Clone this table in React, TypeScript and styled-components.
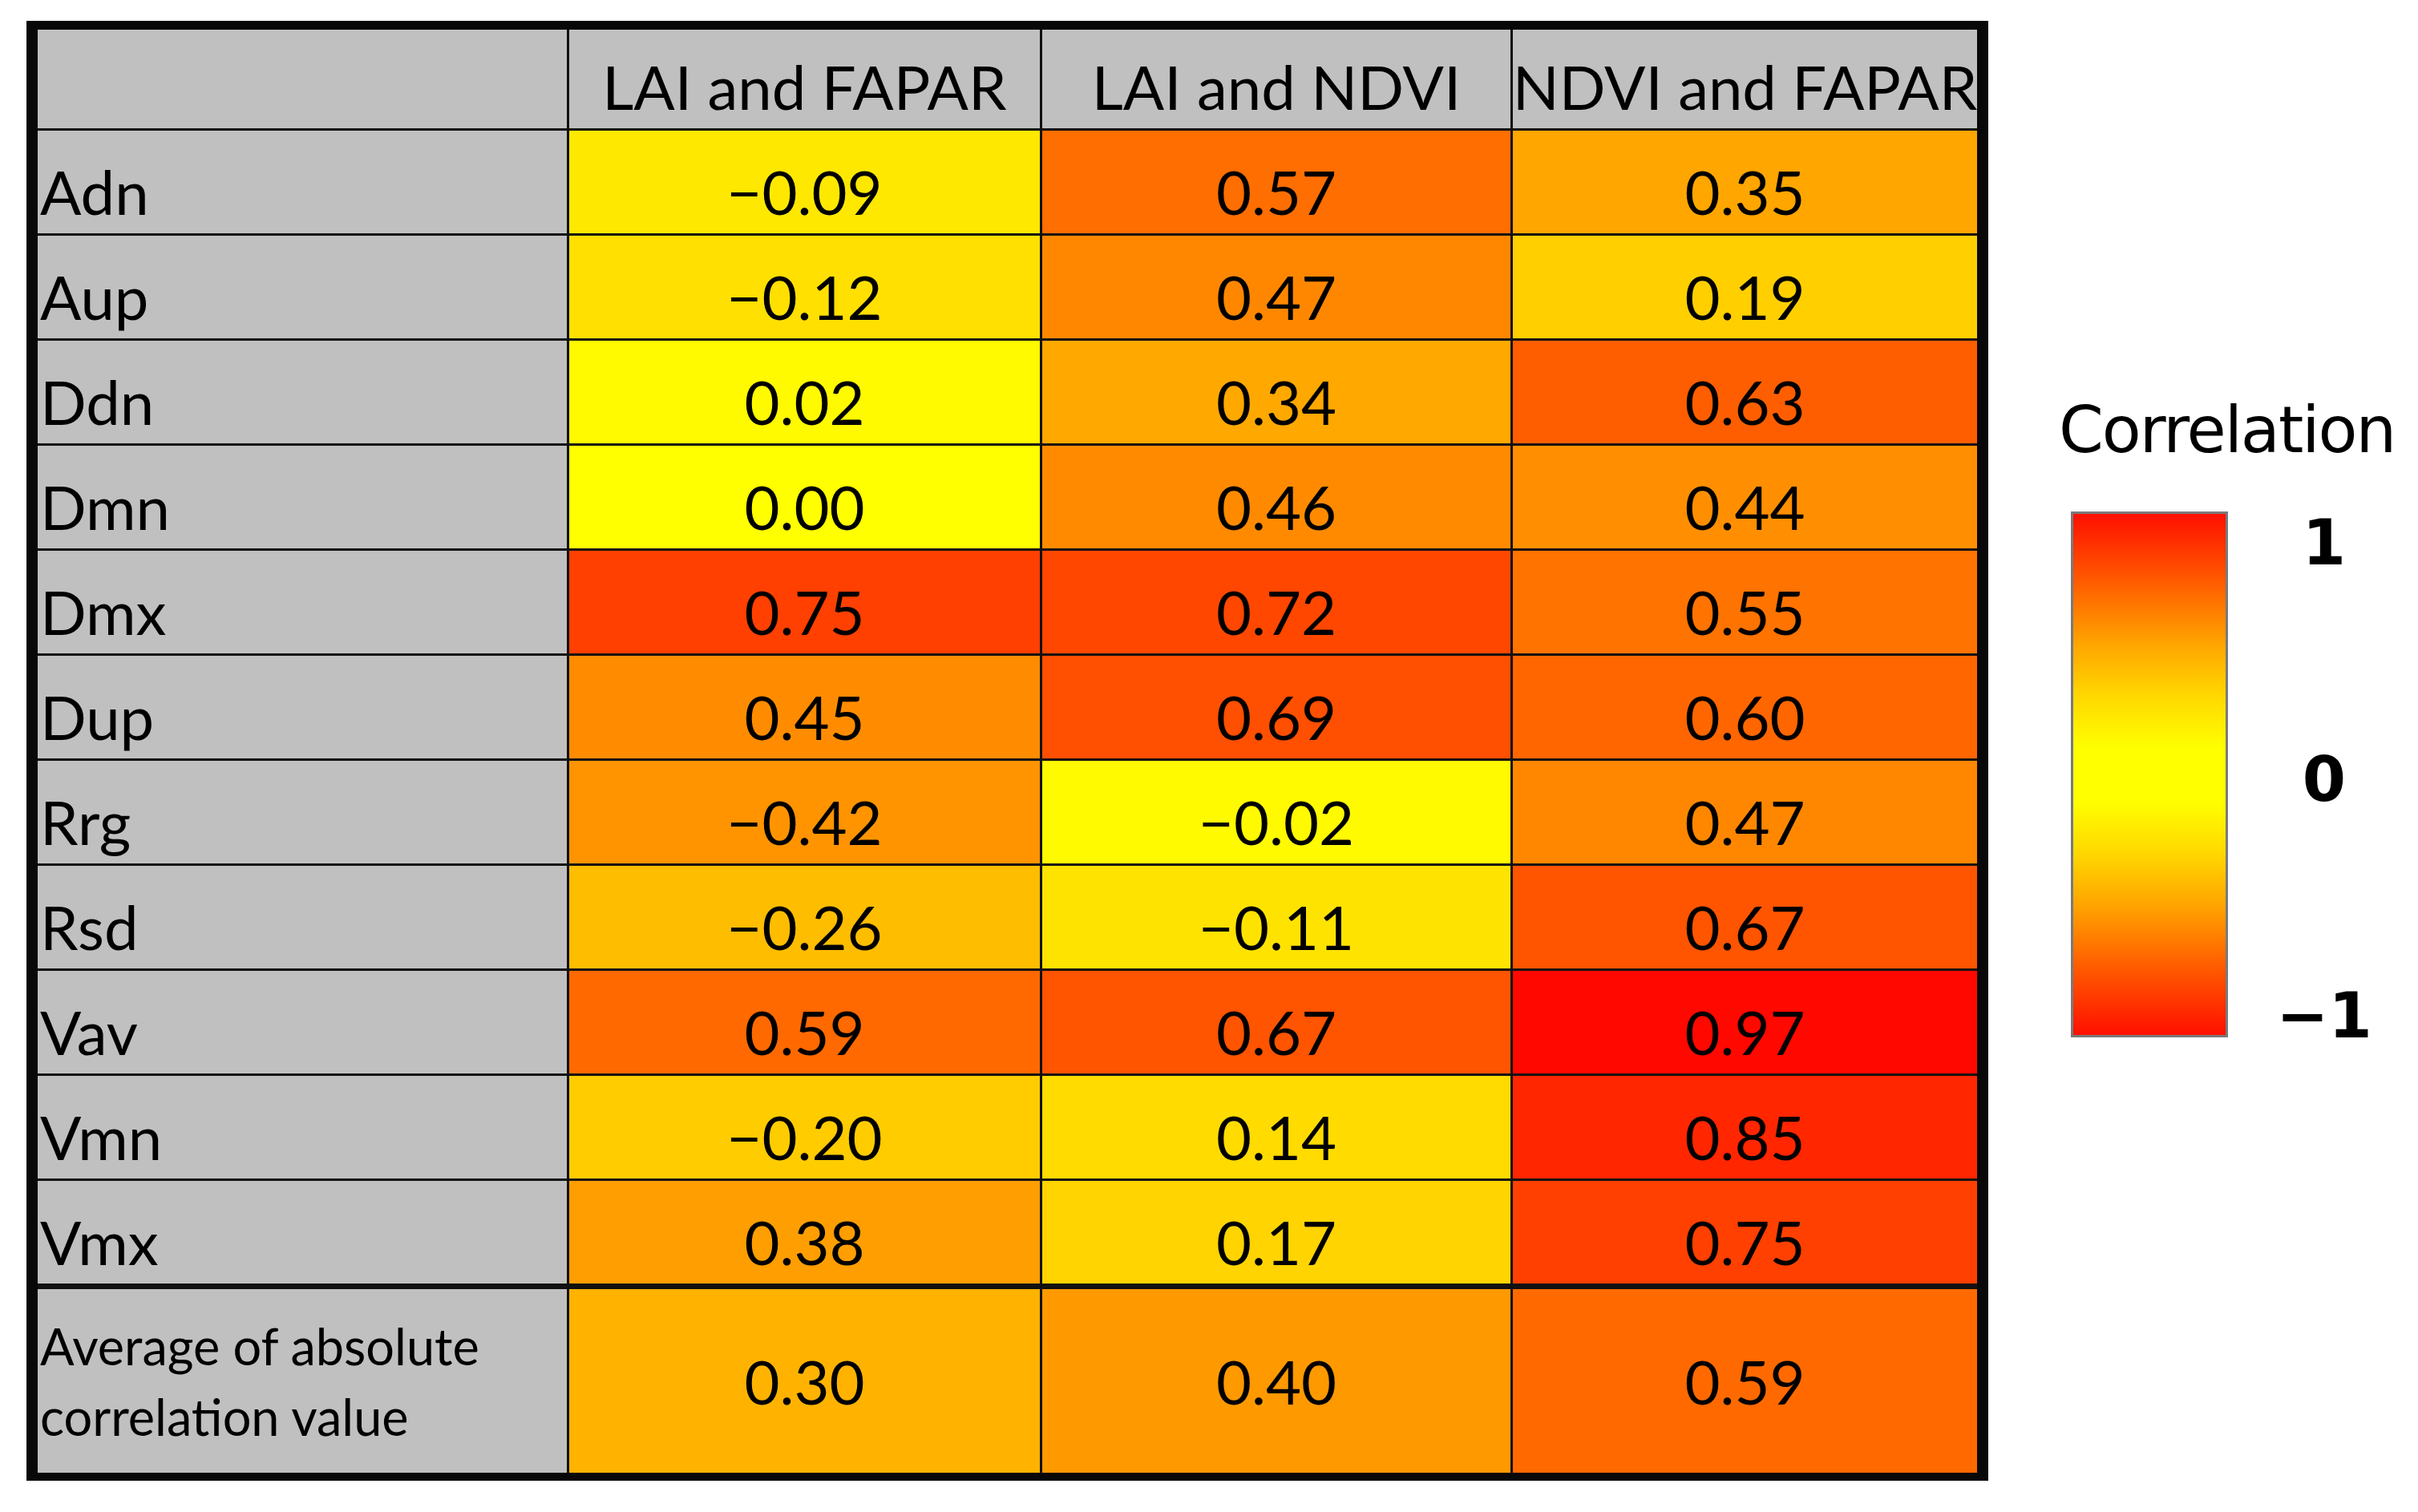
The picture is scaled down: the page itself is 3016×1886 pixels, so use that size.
import React from 'react';
import styled, {createGlobalStyle} from 'styled-components';

const GlobalStyle = createGlobalStyle`
  html, body {
    margin: 0;
    padding: 0;
    background: #fff;
  }
  body {
    width: 3016px;
    height: 1886px;
    overflow: hidden;
    font-family: Lato, "Open Sans", sans-serif;
    color: #000;
  }
`

const columns = ['LAI and FAPAR', 'LAI and NDVI', 'NDVI and FAPAR'];

const rows: [string, number[]][] = [
    ['Adn', [-0.09, 0.57, 0.35]],
    ['Aup', [-0.12, 0.47, 0.19]],
    ['Ddn', [0.02, 0.34, 0.63]],
    ['Dmn', [0.0, 0.46, 0.44]],
    ['Dmx', [0.75, 0.72, 0.55]],
    ['Dup', [0.45, 0.69, 0.6]],
    ['Rrg', [-0.42, -0.02, 0.47]],
    ['Rsd', [-0.26, -0.11, 0.67]],
    ['Vav', [0.59, 0.67, 0.97]],
    ['Vmn', [-0.2, 0.14, 0.85]],
    ['Vmx', [0.38, 0.17, 0.75]],
];

const averages = [0.3, 0.4, 0.59];

// |r| = 0 -> yellow, |r| = 1 -> red
const tone = (v: number) => `rgb(255, ${Math.round(255 * (1 - Math.abs(v)))}, 0)`;
const format = (v: number) => (v < 0 ? '\u2212' : '') + Math.abs(v).toFixed(2);

const GRAY = '#c0c0c0';

export default function App() {
    return (
        <>
            <GlobalStyle/>
            <Page>
                <Table>
                    <Row $height={123} $rule={0}>
                        <LabelCell $fill={GRAY}/>
                        {columns.map(c => (
                            <Cell key={c} $fill={GRAY}>{c}</Cell>
                        ))}
                    </Row>
                    {rows.map(([name, values]) => (
                        <Row key={name} $height={128} $rule={3}>
                            <LabelCell $fill={GRAY}>{name}</LabelCell>
                            {values.map((v, i) => (
                                <Cell key={i} $fill={tone(v)}>{format(v)}</Cell>
                            ))}
                        </Row>
                    ))}
                    <Row $height={229} $rule={7}>
                        <AverageLabel $fill={GRAY}>Average of absolute correlation value</AverageLabel>
                        {averages.map((v, i) => (
                            <AverageCell key={i} $fill={tone(v)}>{format(v)}</AverageCell>
                        ))}
                    </Row>
                </Table>
                <Legend>
                    <LegendTitle>Correlation</LegendTitle>
                    <Scale>
                        <ColorBar/>
                        <Ticks>
                            <Tick>1</Tick>
                            <Tick>0</Tick>
                            <Tick>{'\u2212'}1</Tick>
                        </Ticks>
                    </Scale>
                </Legend>
            </Page>
        </>
    )
}

const Page = styled.div`
  display: flex;
  align-items: flex-start;
  padding: 26px 0 0 33px;
`

const Table = styled.div`
  display: flex;
  flex-direction: column;
  background-color: #111;
  border-style: solid;
  border-color: #080808;
  border-width: 11px 14px 10px 14px;
`

const Row = styled.div<{ $height: number; $rule: number }>`
  display: grid;
  grid-template-columns: 660px 587px 584px 579px;
  column-gap: 3px;
  height: ${p => p.$height}px;
  margin-top: ${p => p.$rule}px;
`

const Cell = styled.div<{ $fill: string }>`
  background-color: ${p => p.$fill};
  display: flex;
  justify-content: center;
  align-items: flex-end;
  padding-bottom: 7px;
  box-sizing: border-box;
  font-size: 76px;
  line-height: 1.2;
  white-space: nowrap;
  overflow: hidden;
`

const LabelCell = styled(Cell)`
  justify-content: flex-start;
  padding-left: 3px;
`

const AverageCell = styled(Cell)`
  align-items: center;
  padding-bottom: 0;
`

const AverageLabel = styled(Cell)`
  justify-content: flex-start;
  align-items: center;
  padding: 0 0 0 3px;
  font-size: 63px;
  line-height: 88px;
  white-space: normal;
`

const Legend = styled.div`
  display: flex;
  flex-direction: column;
  margin-left: 88px;
  margin-top: 471px;
`

const LegendTitle = styled.div`
  font-family: "DejaVu Sans", Verdana, sans-serif;
  font-size: 80px;
  line-height: 1;
  letter-spacing: -2px;
  white-space: nowrap;
`

const Scale = styled.div`
  display: flex;
  margin-top: 61px;
  margin-left: 15px;
`

const ColorBar = styled.div`
  width: 196px;
  height: 656px;
  box-sizing: border-box;
  border: 3px solid #7a7a7a;
  background: linear-gradient(
    to bottom,
    #ff1000 0%,
    #ff5500 12%,
    #ffa500 25%,
    #ffd800 35%,
    #ffff00 45%,
    #ffff00 55%,
    #ffd800 65%,
    #ffa500 75%,
    #ff5500 88%,
    #ff1000 100%
  );
`

const Ticks = styled.div`
  display: flex;
  flex-direction: column;
  justify-content: space-between;
  width: 120px;
  height: 668px;
  margin-left: 60px;
`

const Tick = styled.div`
  font-family: "DejaVu Sans", Verdana, sans-serif;
  font-weight: bold;
  font-size: 78px;
  line-height: 1;
  text-align: center;
`
